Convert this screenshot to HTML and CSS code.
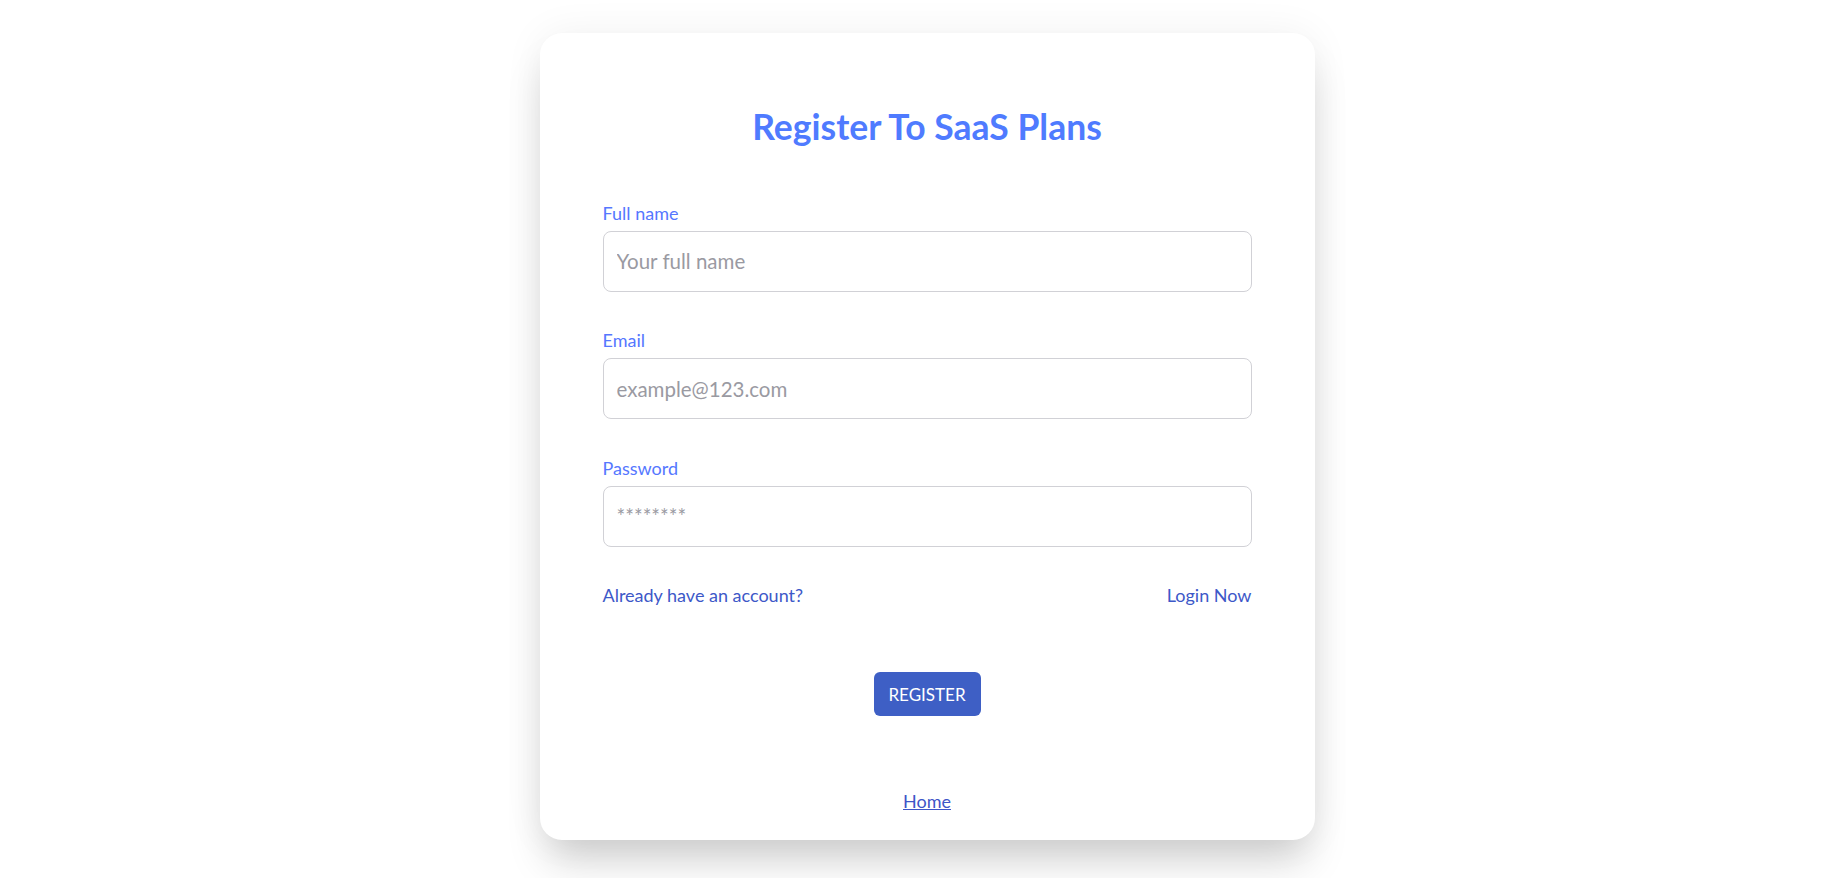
FILE: index.html
```html
<!DOCTYPE html>
<html lang="en">
<head>
<meta charset="utf-8">
<title>Register To SaaS Plans</title>
<link rel="stylesheet" href="styles.css">
</head>
<body>
<main class="page">
  <section class="card">
    <h1 class="title">Register To SaaS Plans</h1>
    <form class="form">
      <div class="field">
        <label class="label" for="name">Full name</label>
        <input class="input" id="name" type="text" placeholder="Your full name">
      </div>
      <div class="field">
        <label class="label" for="email">Email</label>
        <input class="input" id="email" type="email" placeholder="example@123.com">
      </div>
      <div class="field">
        <label class="label" for="pw">Password</label>
        <input class="input" id="pw" type="password" placeholder="********">
      </div>
      <div class="links">
        <a class="link" href="#">Already have an account?</a>
        <a class="link" href="#">Login Now</a>
      </div>
      <div class="actions">
        <button class="btn" type="button">REGISTER</button>
      </div>
    </form>
    <div class="home"><a class="home-link" href="#">Home</a></div>
  </section>
</main>
</body>
</html>
```
FILE: styles.css
```css
* { box-sizing: border-box; }
html, body { margin: 0; padding: 0; background: #ffffff; }
body { font-family: "Lato", "Open Sans", sans-serif; }
.page {
  display: flex;
  justify-content: center;
  padding: 33px 0 0 17px;
  min-height: 878px;
}
.card {
  width: 775px;
  height: 807px;
  background: #fff;
  border-radius: 22px;
  padding: 74px 63px 0;
  box-shadow: 0 0 40px rgba(0,0,0,0.06), 0 28px 40px -8px rgba(0,0,0,0.18);
}
.title {
  margin: 0;
  height: 40px;
  line-height: 40px;
  text-align: center;
  font-size: 35.5px;
  font-weight: 700;
  color: #4f7bff;
}
.form { margin-top: 53.5px; }
.field { display: flex; flex-direction: column; margin-bottom: 36.5px; }
.label {
  line-height: 24px;
  font-size: 18px;
  color: #5577ff;
  margin-bottom: 6px;
}
.input {
  height: 61px;
  border: 1px solid #d1d1d6;
  border-radius: 8px;
  padding: 0 13px;
  font-family: inherit;
  font-size: 20.5px;
  color: #333;
  outline: none;
}
.input::placeholder { color: #9a9aa2; }
.links {
  display: flex;
  justify-content: space-between;
  margin-top: 4px;
  line-height: 24px;
}
.link {
  font-size: 18px;
  color: #3d58c8;
  text-decoration: none;
}
.actions { display: flex; justify-content: center; margin-top: 65px; }
.btn {
  width: 107px;
  height: 44px;
  background: #3e5fc5;
  color: #fff;
  border: none;
  border-radius: 6px;
  font-family: inherit;
  font-size: 17px;
}
.home { text-align: center; margin-top: 73px; line-height: 24px; }
.home-link { font-size: 18px; color: #3d55c7; text-decoration: underline; }
```
